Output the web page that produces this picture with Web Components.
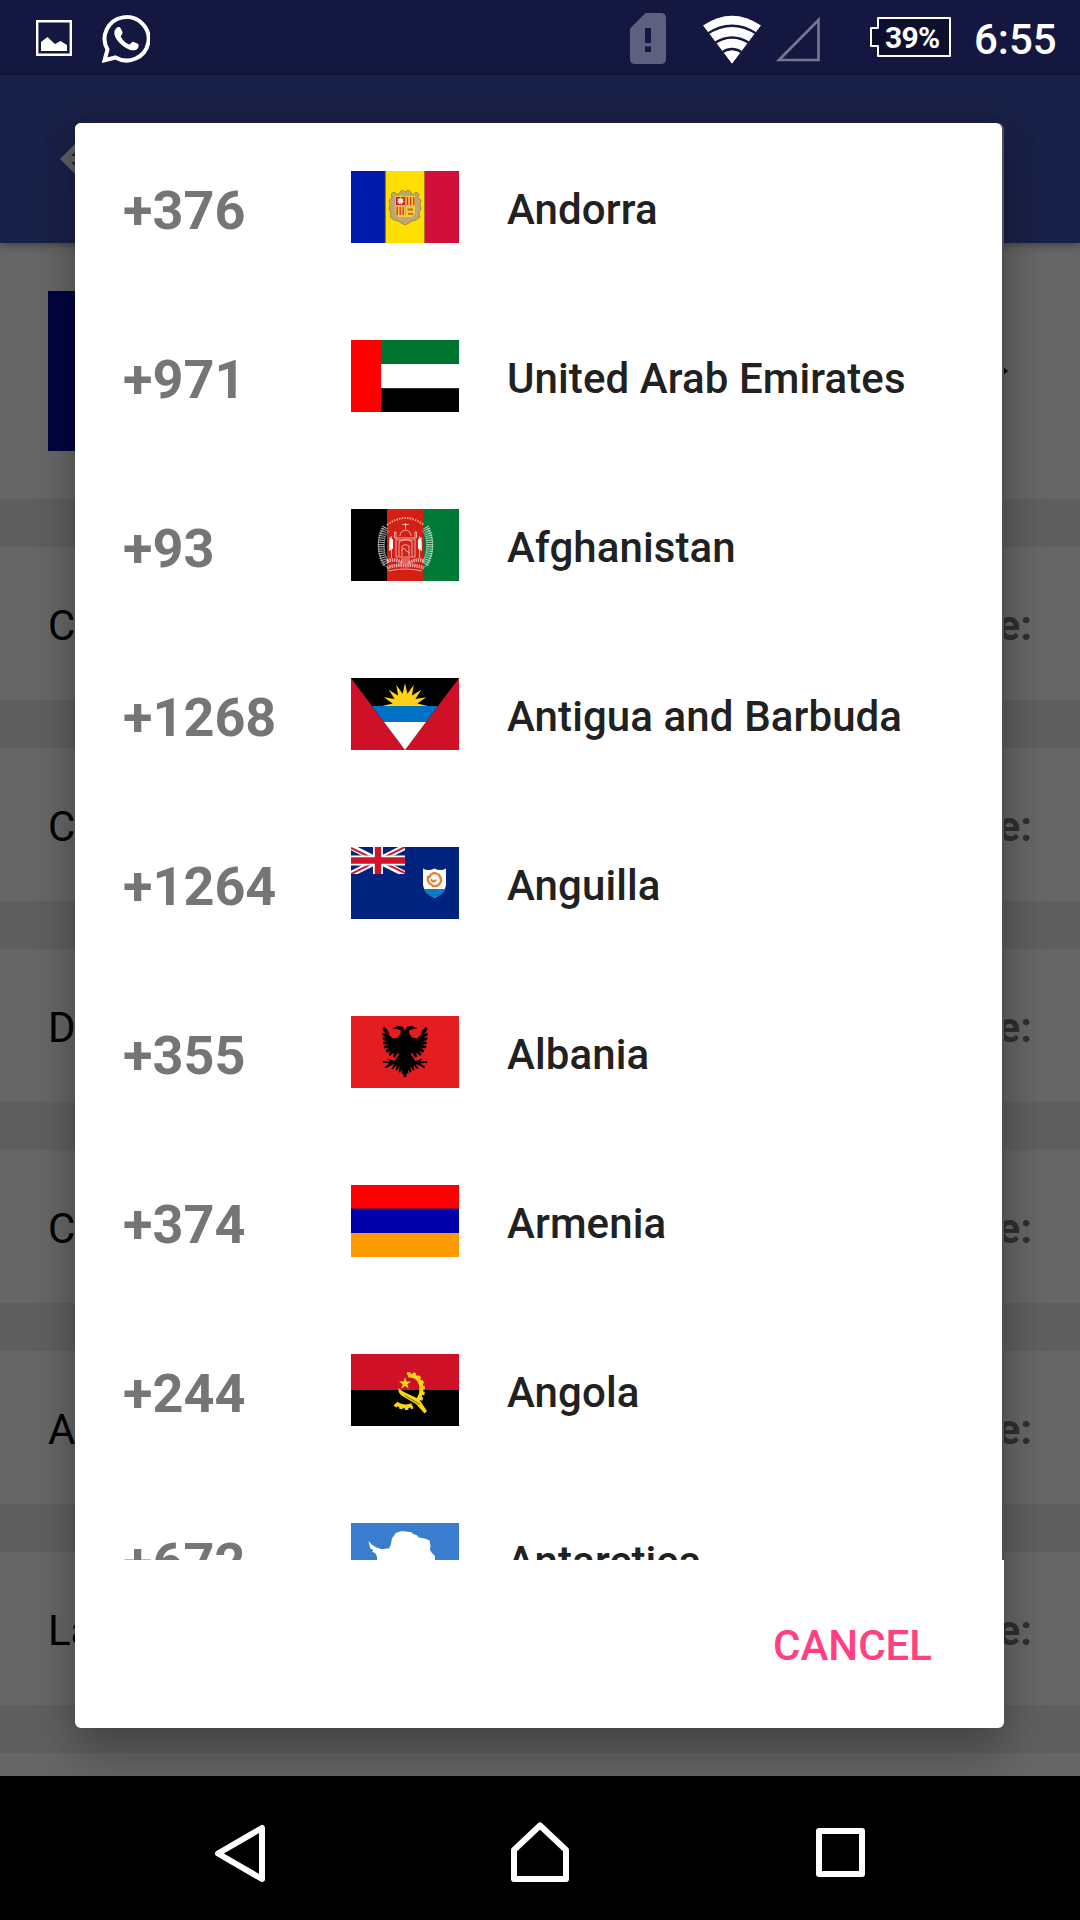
<!DOCTYPE html>
<html lang="en">
<head>
<meta charset="utf-8">
<title>Country code picker</title>
<style>
html,body{margin:0;padding:0;background:#000}
body{width:1080px;height:1920px;overflow:hidden;font-family:Roboto,sans-serif}
</style>
</head>
<body>
<phone-screen></phone-screen>
<script>
const define = (name, html) => customElements.define(name, class extends HTMLElement {
  connectedCallback() {
    if (this.shadowRoot) return;
    const t = document.createElement('template');
    t.innerHTML = typeof html === 'function' ? html(this) : html;
    this.attachShadow({ mode: 'open' }).appendChild(t.content.cloneNode(true));
  }
});

/* Regular points around a centre, alternating between two radii */
const star = (cx, cy, outer, inner, n, from = -90, sweep = 360) => {
  const pts = [], steps = n * 2 * sweep / 360;
  for (let i = 0; i <= steps; i++) {
    const a = (from + i * 180 / n) * Math.PI / 180, r = i % 2 ? inner : outer;
    pts.push((cx + r * Math.cos(a)).toFixed(1) + ',' + (cy + r * Math.sin(a)).toFixed(1));
  }
  return pts.join(' ');
};

const eagleHalf = `<path d="M54 15 L52 10.8 L47 10 L41.500 12.2 L46 13 L50 14.5 L49.5 18 L47 21.5 L42 22.5 L38.5 19.5 L37 15 L33 10.5 L31.3 13.5 L35 18 L31.3 16.500 L31.500 19.5 L36 22 L31.500 21.2 L32 24 L36.7 25.5 L32 25.7 L32.500 28.300 L37.3 28.8 L32.500 30 L33.500 32.500 L38 32 L34.500 34.5 L36 36.8 L40 34.6 L37.500 38 L39 40 L43 36.2 L42 40.500 L44 41.800 L47 36.5 L48 38.5 L45 43 L43.5 45 L36 42.500 L39 45.500 L31.500 45.300 L32 46.800 L38.500 47.500 L33.800 51 L35 52 L41 49 L43.5 47.8 L40.500 52.5 L42 53 L45.500 49 L44.500 54 L46 54.500 L49 50 L47.500 56 L49 56.500 L51 53 L50.5 58 L52 57 L52.5 60 L54 61.500Z"/>`;

const FLAGS = {
  ad: `<path fill="#001aae" d="M0 0h35v72H0z"/><path fill="#ffdf00" d="M34.5 0h39.5v72H34.5z"/><path fill="#d0103a" d="M73.5 0H108v72H73.5z"/>
    <path d="M34.3 0v72M73.7 0v72" stroke="#8f7030" stroke-width=".8"/>
    <path fill="#bfa771" stroke="#8e7440" stroke-width=".7" d="M49 21l2-2 3 2 3-2 3 2 1 3 4-3 3 2-1 4 3 2-1 5 1 4-2 4 1 4-4 3-4 1-3 2-4 2-4-2-3-2-4-1-4-3 1-4-2-4 1-4-1-5 3-2-1-4 3-2 4 3z"/>
    <path fill="#f2cf3c" d="M44.5 25H64v17l-3 4H47.500l-3-4z"/><path fill="#d0103a" d="M45 26h9v8h-9z"/><path fill="#fff1b0" d="${'M' + star(49.5,30,4,2.4,7).replace(/ /g,'L')}Z"/>
    <path d="M56.500 26v8M59.700 26v8M62.800 26v8M46.200 36v8M49.200 36v8M52.200 36v8" stroke="#d8302a" stroke-width="1.400"/><path d="M56.500 37.500h5.500v2h-5.500zM57 42h5v1.800h-5z" fill="#d8581e"/>
    <path d="M54.500 25v20M44.500 35H64" stroke="#c4a860" stroke-width="1.200"/>`,
  ae: `<path fill="#00732f" d="M30 0h78v24H30z"/><path fill="#fff" d="M30 24h78v24H30z"/><path fill="#000" d="M30 48h78v24H30z"/><path fill="#333" d="M30 48h78v1H30z"/><path fill="red" d="M0 0h30v72H0z"/>`,
  af: `<path d="M0 0h36v72H0z"/><path fill="#d41f14" d="M36 0h36v72H36z"/><path fill="#007a36" d="M72 0h36v72H72z"/>
    <g fill="none" stroke="#fff" stroke-opacity=".62">
    <path stroke-width="6.500" stroke-dasharray="1.200 1" d="M34 18C29 27 28 44 35 56M75 18C80 27 81 44 74 56" />
    <path stroke-width=".7" d="M34 18C24 28 26 48 35 58M75 18C85 28 83 48 74 58M38 21C31 29 32 44 38 54M71 21C78 29 77 44 71 54"/>
    <path stroke-width="2" stroke-dasharray="1.500 1.200" d="M36 16Q54.500 2 73 16"/>
    <path stroke-width="1" d="M54.500 14v6M51 15.500h7M49 27q0-5 5.500-6q5.500 1 5.500 6M45 48V29h19v19zM48 47V33q6.500-5 13 0v14M51 47V37q3.500-3 7 0v10M45 29v-6h-1.500v6M64 29v-6h1.500v6M46 31h17M50 42l3-3 2 3 4 2"/>
    <path stroke-width="3.500" stroke-dasharray="1.500 .8" d="M36 52q9-3 15 2M58 54q8-5 15-2M36 59q9-4 18-2q9-2 19 2"/><path stroke-width="1" d="M50 50h9M50 52h9M50 54h9M37 62q17-4 34 0M40.500 27v22M68.500 27v22"/></g>
    <path fill="#fff" d="M38.500 28l3.500 2.500v9L38 42zM70.500 28L67 30.500v9l4 2.500z"/>`,
  ag: `<path fill="#ce1126" d="M0 0h108v72H0z"/><path d="M0 0h108L54 72z"/><polygon fill="#fcd116" points="${star(54,28,23,12.5,16,180,180)}"/><path fill="#0072c6" d="M21 28h66L75 44H33z"/><path fill="#fff" d="M33 44h42L54 72z"/>`,
  ai: `<path fill="#00247d" d="M0 0h108v72H0z"/><svg width="54" height="27" viewBox="0 0 54 27"><path d="M0 0l54 27M54 0L0 27" stroke="#fff" stroke-width="6"/><path d="M0 1l27 13M54 26L27 13M54 0L27 13.500M0 27l27-13.500" stroke="#cf142b" stroke-width="2"/><path d="M27 0v27M0 13.500h54" stroke="#fff" stroke-width="10"/><path d="M27 0v27M0 13.500h54" stroke="#cf142b" stroke-width="6.500"/></svg>
    <path fill="#fff" d="M72 21.500q5 3 11.500 0q6 3 11.500 0V38q-1 8-11.500 13Q73 46 72 38z"/><path fill="#0b7bc7" d="M72.500 42h22q-3 6-11 9q-8-3-11-9z"/>
    <g fill="none" stroke="#f07c28" stroke-width="2.200" stroke-linecap="round"><path d="M78.500 30q2-5 7-3.500M77 29.500q-1.500 6 4 8.500M88 28q4.500 6-1 10.500M81.500 38.800q5 1 8-3.500M85 26.500q4 1 5 5.500M80.500 33q2 2.500 4 .5"/></g>`,
  al: `<path fill="#e41e20" d="M0 0h108v72H0z"/>${eagleHalf}<g transform="matrix(-1 0 0 1 108 0)">${eagleHalf}</g>`,
  am: `<path fill="red" d="M0 0h108v24H0z"/><path fill="#00a" d="M0 24h108v24H0z"/><path fill="#5a0a6a" d="M0 23.300h108v1H0z"/><path fill="#ff9a00" d="M0 48h108v24H0z"/>`,
  ao: `<path fill="#ce1126" d="M0 0h108v36H0z"/><path d="M0 36h108v36H0z"/>
    <g fill="none" stroke="#f9d616"><path stroke-width="4" d="M57 21.500C70 20 75 36 65.500 48M45 49.500Q53 54.500 61 51"/><path stroke-width="3" stroke-dasharray="3.200 2.500" d="M56 19.800C72 17 77 37 68 49M43.500 50.500Q53 57 62 53"/>
    </g><path fill="#f9d616" d="M47.500 34q-1 6 5.500 9l12 7 8.500 9.500 2.500-2.500-8-12-12-5.500q-5-2-8.500-5.500z"/><path d="M54 41.500l15 9" stroke="#584a00" stroke-width=".8"/><polygon fill="#f9d616" points="${star(54,29.5,6.3,2.5,5)}"/>`,
  aq: `<path fill="#3a7dce" d="M0 0h108v72H0z"/><path fill="#fff" d="M17.500 18l3.200 3.500 4.300 2.800 5.700 2 7.600-1 1.700-4.300 1-6 1.500-1.500 2.200-3.500 6-2 10 1.200 1 1.500 4.300 1.500 1.500 2 7 1.500 4 1.800 1 5-.5 4.500 2 3 3 3v12H26V33.700l-1.700-3.400-3-1.600 1-2-2.700-1-1.300-3.700z"/>`
};

define('country-flag', el => `<style>:host{display:block;width:108px;height:72px}svg{display:block}</style><svg width="108" height="72" viewBox="0 0 108 72">${FLAGS[el.getAttribute('code')]}</svg>`);

define('country-row', el => `<style>
  :host{display:flex;align-items:flex-start;height:72px;padding:48px;margin-bottom:1px;color:#212121}
  .code{width:228px;font:700 54px/72px Roboto,sans-serif;color:#757575;padding-top:4px}
  .name{margin-left:48px;font:500 42px/72px Roboto,sans-serif;letter-spacing:.1px;white-space:nowrap;padding-top:3px}
  </style><span class="code"><slot name="code"></slot></span><country-flag code="${el.getAttribute('flag')}"></country-flag><span class="name"><slot></slot></span>`);

define('status-bar', `<style>
  :host{display:flex;align-items:flex-start;height:75px;background:#141840;color:#fff;box-sizing:border-box;padding:0 24px 0 36px}
  svg{display:block;flex:none}
  .battery{display:grid;margin:17px 23px 0 50px;width:81px;height:40px}
  .battery>*{grid-area:1/1}
  .battery span{font:700 30px/41px Roboto,sans-serif;padding-left:15px;letter-spacing:-.7px}
  .time{font:500 42px/50px Roboto,sans-serif;margin-top:15px;width:82px;white-space:nowrap}
  </style>
  <svg style="margin-top:20px" width="36" height="36" viewBox="0 0 36 36"><path d="M1.200 1.200h33.600v33.600H1.200z" fill="none" stroke="#fff" stroke-width="2.400"/><path d="M5 22l6.500-5 7.500 7 5.500-3 6.500 4v6H5z" fill="#fff"/></svg>
  <svg style="margin:14px auto 0 30px" width="48" height="49" viewBox="0 0 48 49"><path d="M2.500 46.300L5.500 35.500A22 21.700 0 1 1 13.500 43.500Z" fill="none" stroke="#fff" stroke-width="4"/><path fill="#fff" d="M15 13.500c1.500-1 3-.5 3.700.8l1.800 4c.5 1.500-1.500 3-1.800 4.200 2 4 5 6.500 8.500 8 1.500-.3 2.500-3 4-2.700l5 2.200c1 1 .3 3.500-.7 4.700-2.500 2.500-7 2-12-1C18 30 13 25 12.300 19.500c-.2-2.500.9-4.500 2.700-6z"/></svg>
  <svg style="margin-top:13px" width="36" height="51" viewBox="0 0 36 51"><path fill="#5d607e" fill-rule="evenodd" d="M15.500 0H31q5 0 5 5v41q0 5-5 5H5q-5 0-5-5V15.500zM15 15h6v15h-6zM15 33.500h6V39h-6z"/></svg>
  <svg style="margin:15px 0 0 37px" width="58" height="49" viewBox="0 0 58 49"><defs><clipPath id="w"><path d="M29 49L-1 9.500V0h60v9.500z"/></clipPath></defs><g clip-path="url(#w)"><path d="M29 49L0 10.500Q29-9 58 10.500z" fill="#fff"/><g fill="none" stroke="#141840" stroke-width="2.500"><path d="M4 19Q29 2.500 54 19M11 28.500Q29 16.500 47 28.500M18 38Q29 30 40 38"/></g></g></svg>
  <svg style="margin:16px 0 0 14px" width="45" height="46" viewBox="0 0 45 46"><path d="M4 44L43.500 4V44z" fill="none" stroke="#757790" stroke-width="2.700"/></svg>
  <div class="battery"><svg width="81" height="40" viewBox="0 0 81 40"><path d="M8 1h72v38H8V29H1V11h7z" fill="#0d102c" stroke="#fff" stroke-width="2" stroke-linejoin="round"/></svg><span>39%</span></div>
  <span class="time">6:55</span>`);

define('app-bar', `<style>
  :host{display:flex;align-items:center;height:168px;background:#1a2148;padding-left:60px;box-shadow:0 2px 8px rgba(0,0,0,.35);position:relative;z-index:1}
  svg{display:block}</style>
  <svg width="32" height="34" viewBox="0 0 32 34"><path fill="#5f5f5f" fill-rule="evenodd" d="M0 17L17 0h15v34H17zM11 14h21L17 8zM11 20h21L17 26z"/></svg>`);

define('profile-card', `<style>
  :host{display:flex;align-items:center;justify-content:space-between;height:256px;box-sizing:border-box;padding:0 72px 0 48px;background:#666}
  .pic{width:160px;height:160px;background:#000640}svg{display:block}</style>
  <div class="pic"></div><svg width="12" height="20" viewBox="0 0 12 20"><path d="M0 0l12 10L0 20z"/></svg>`);

define('field-card', `<style>
  :host{display:flex;justify-content:space-between;height:153px;background:#666;padding:0 48px;margin-top:48px;font:400 42px/157px Roboto,sans-serif;color:#000}
  .v{font-weight:700;color:#303030}</style>
  <span><slot></slot></span><span class="v"><slot name="value"></slot></span>`);

define('picker-dialog', `<style>
  :host{display:flex;flex-direction:column;position:absolute;left:75px;top:123px;width:929px;height:1605px;border-radius:6px;background:linear-gradient(#505050,#505050) 100% 0/8px 1437px no-repeat #fff;box-shadow:0 34px 46px rgba(0,0,0,.2),0 0 34px rgba(0,0,0,.16);z-index:2}
  .list{height:1437px;margin-right:2px;border-radius:6px 6px 0 0;background:#fff;overflow:hidden;flex:none}
  .actions{display:flex;justify-content:flex-end;padding:0 72px 0 0}
  button{all:unset;font:500 42px/50px Roboto,sans-serif;color:#ff4081;margin-top:61px}
  </style><div class="list"><slot></slot></div><div class="actions"><button>CANCEL</button></div>`);

define('nav-bar', `<style>
  :host{display:flex;height:144px;background:#000;box-sizing:border-box;padding:45px 215px 0;justify-content:space-between;position:relative;z-index:3}
  svg{display:block}path{fill:none;stroke:#fff;stroke-width:6;stroke-linejoin:round}</style>
  <svg width="50" height="61" viewBox="0 0 50 61"><path d="M3 32.500L47 7v51z"/></svg>
  <svg width="58" height="61" viewBox="0 0 58 61"><path d="M3 58V29L29 4.500 55 29v29z"/></svg>
  <svg width="50" height="61" viewBox="0 0 50 61"><path d="M4 10h43v43H4z"/></svg>`);

const fields = ['C', 'C', 'D', 'C', 'A', 'La'];
const countries = [
  ['+376', 'ad', 'Andorra'], ['+971', 'ae', 'United Arab Emirates'], ['+93', 'af', 'Afghanistan'],
  ['+1268', 'ag', 'Antigua and Barbuda'], ['+1264', 'ai', 'Anguilla'], ['+355', 'al', 'Albania'],
  ['+374', 'am', 'Armenia'], ['+244', 'ao', 'Angola'], ['+672', 'aq', 'Antarctica']
];
define('phone-screen', `<style>
  :host{display:flex;flex-direction:column;width:1080px;height:1920px;position:relative;overflow:hidden;background:#000}
  main{height:1533px;overflow:hidden;background:#5f5f5f}
  main::after{content:"";display:block;height:30px;margin-top:48px;background:#666}
  </style>
  <status-bar></status-bar><app-bar></app-bar>
  <main><profile-card></profile-card>${fields.map(f => `<field-card>${f}<span slot="value">e:</span></field-card>`).join('')}</main>
  <nav-bar></nav-bar>
  <picker-dialog>${countries.map(([c, f, n]) => `<country-row flag="${f}"><span slot="code">${c}</span>${n}</country-row>`).join('')}</picker-dialog>`);
</script>
</body>
</html>
